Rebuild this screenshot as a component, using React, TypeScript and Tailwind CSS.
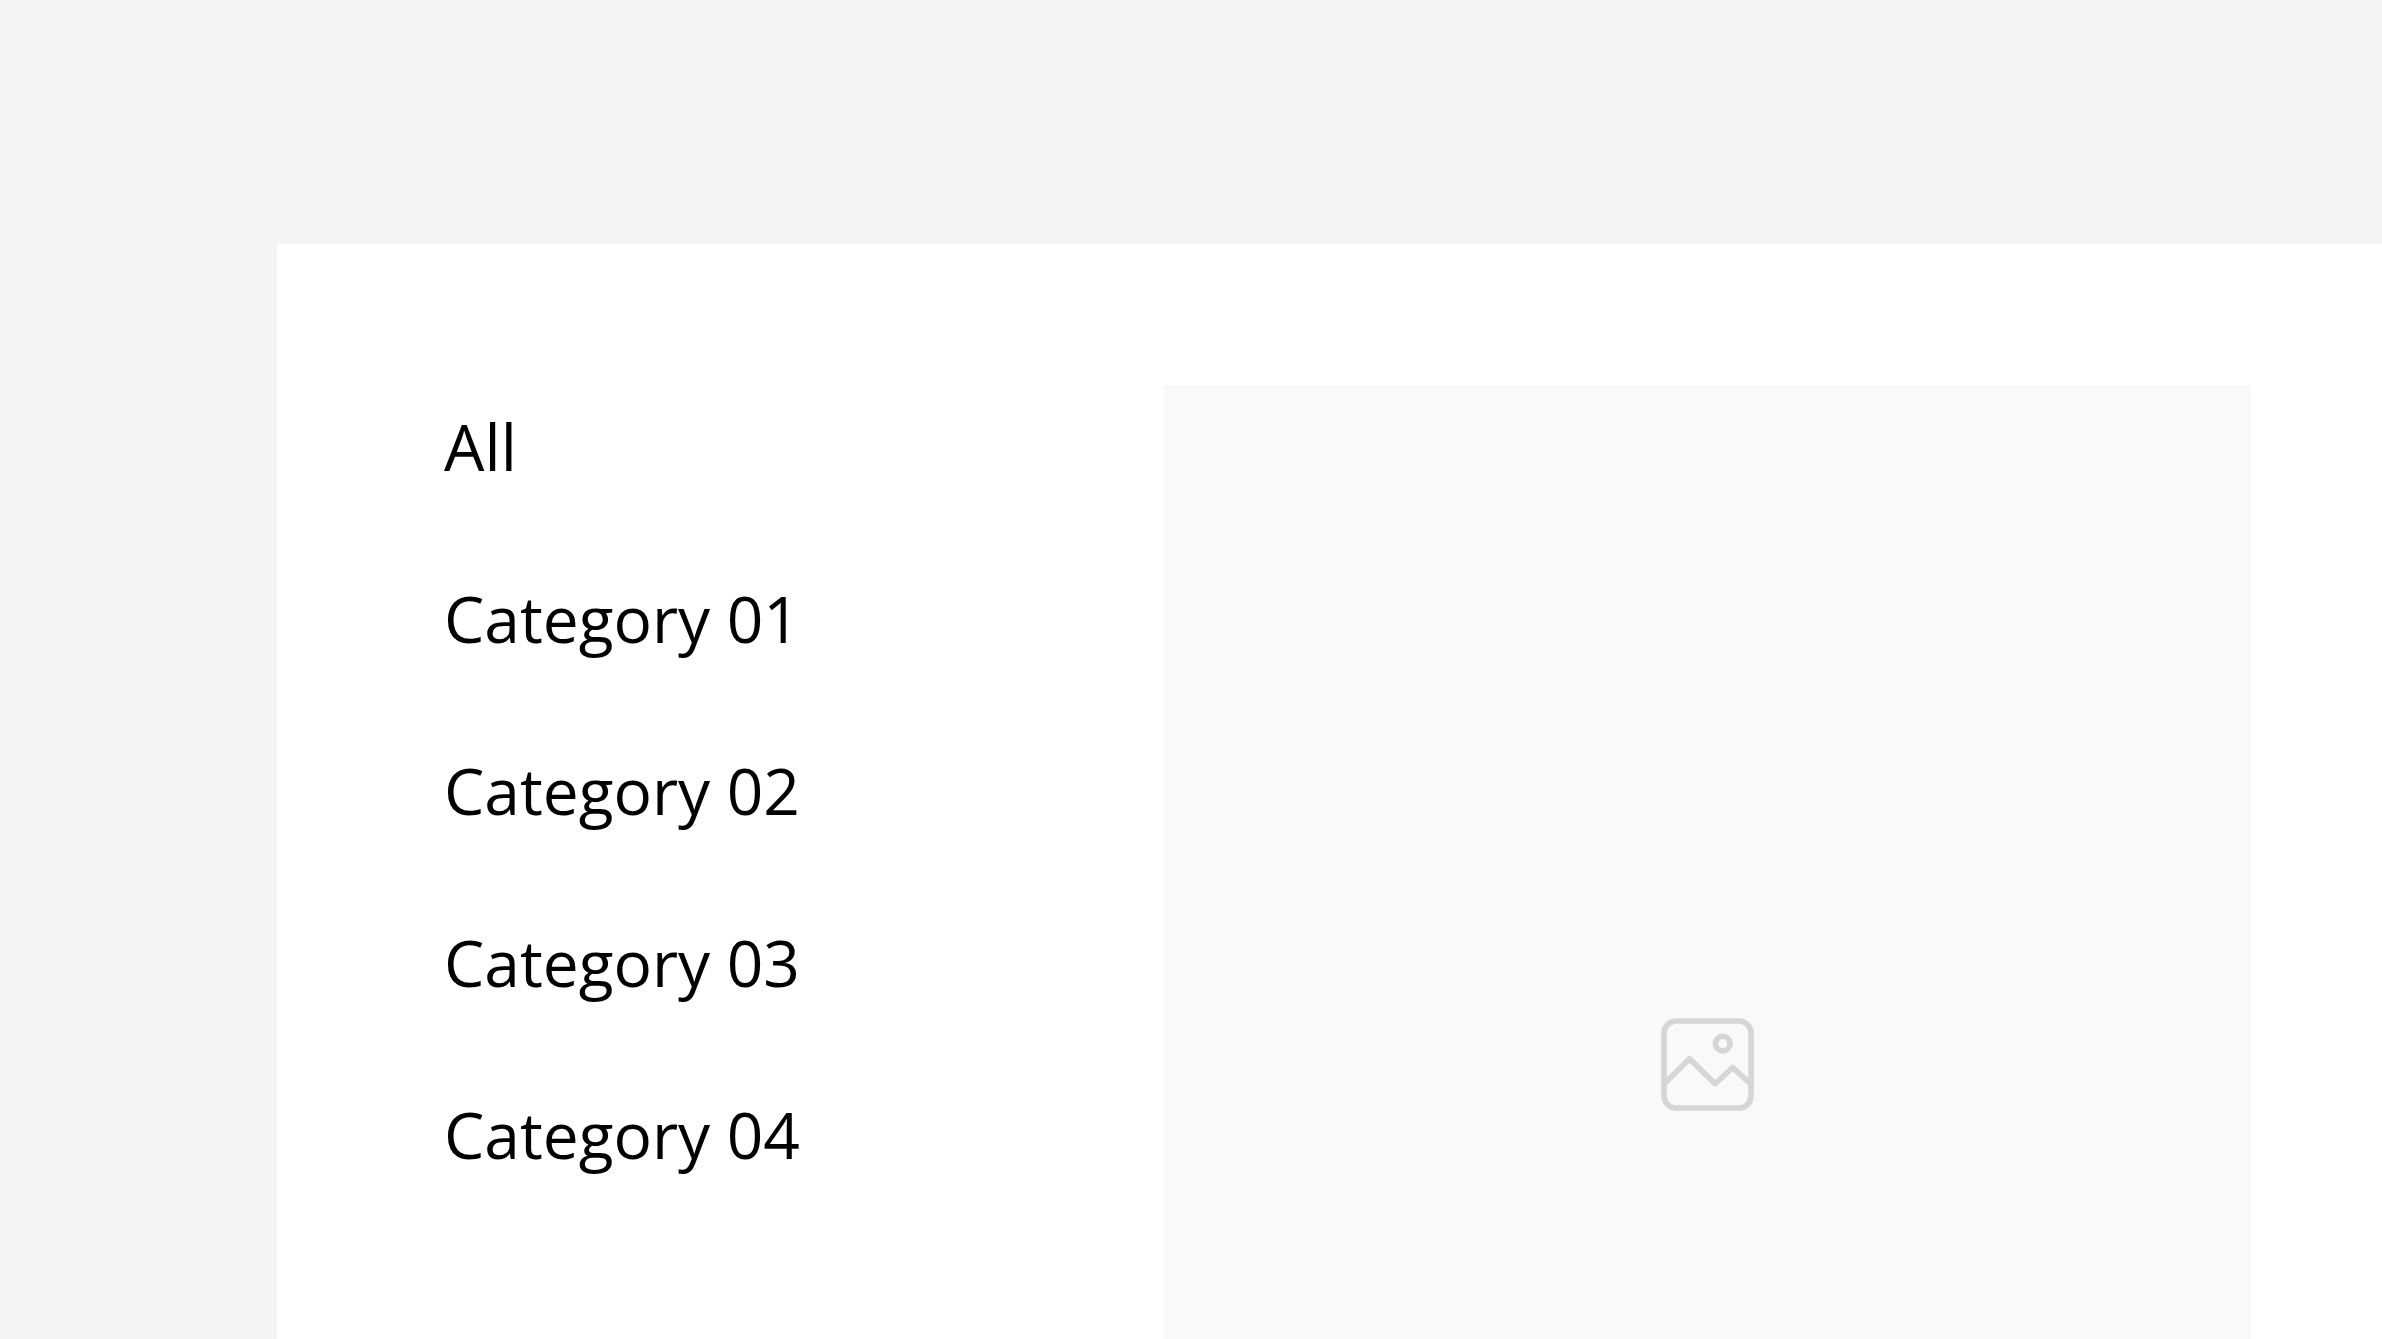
const categories = ['All', 'Category 01', 'Category 02', 'Category 03', 'Category 04'];

function ImagePlaceholderIcon() {
  return (
    <svg
      viewBox="0 0 280 280"
      className="w-[93px] h-[93px] text-[#d6d6d6]"
      fill="none"
      stroke="currentColor"
      strokeWidth="17"
      strokeLinecap="round"
      strokeLinejoin="round"
      aria-hidden="true"
    >
      <rect x="9" y="9" width="262" height="262" rx="37" />
      <circle cx="186" cy="77" r="22" />
      <path d="M11 197 L86 123 L163 198 L216 149 L268 197" />
    </svg>
  );
}

export default function App() {
  return (
    <div className="h-screen overflow-hidden bg-[#f4f4f4] pl-[277px] pt-[244px] font-['Open_Sans',sans-serif] text-black">
      <main className="grid grid-cols-[720fr_1087fr] items-start bg-white pt-[141px] pb-[141px] pl-[167px] pr-[131px]">
        <nav aria-label="Categories" className="pt-[18px]">
          <ul className="flex flex-col gap-[84px]">
            {categories.map((category) => (
              <li key={category} className="flex">
                <a href="#" className="text-[64px] leading-[88px] whitespace-nowrap">
                  {category}
                </a>
              </li>
            ))}
          </ul>
        </nav>

        <div className="flex aspect-[4/5] items-center justify-center bg-[#f9f9f9]">
          <ImagePlaceholderIcon />
        </div>
      </main>
    </div>
  );
}
